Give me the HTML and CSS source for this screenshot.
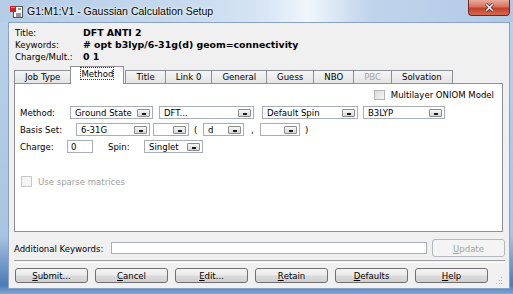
FILE: index.html
```html
<!DOCTYPE html>
<html>
<head>
    <title>Gaussian Calculation Setup</title>
    <link rel="stylesheet" href="styles.css">
</head>
<body>
<div class="frame">
    <div class="titlebar">
        <svg class="app-icon" width="13" height="13" viewBox="0 0 13 13">
            <rect x="3.5" y="1.5" width="9" height="11" fill="#fff" stroke="#555"/>
            <rect x="0" y="1" width="6" height="6" fill="#d42020"/>
            <rect x="1" y="2" width="4" height="1" fill="#ff8a8a"/>
            <path d="M6 9h5M6 11h5M8 4h3" stroke="#333" stroke-width="1"/>
        </svg>
        <span class="caption">G1:M1:V1 - Gaussian Calculation Setup</span>
        <div class="close">
            <svg width="11" height="9" viewBox="0 0 11 9">
                <path d="M2 1l7 7M9 1l-7 7" stroke="#5a1e14" stroke-width="3"/>
                <path d="M2 1l7 7M9 1l-7 7" stroke="#fff" stroke-width="1.6"/>
            </svg>
        </div>
    </div>

    <div class="client">
        <div class="summary">
            <div class="sum-row"><span class="sum-label">Title:</span><b>DFT ANTI 2</b></div>
            <div class="sum-row"><span class="sum-label">Keywords:</span><b># opt b3lyp/6-31g(d) geom=connectivity</b></div>
            <div class="sum-row"><span class="sum-label">Charge/Mult.:</span><b>0 1</b></div>
        </div>

        <div class="tabs">
            <span class="tab">Job Type</span>
            <span class="tab active"><span class="focus">Method</span></span>
            <span class="tab">Title</span>
            <span class="tab">Link 0</span>
            <span class="tab">General</span>
            <span class="tab">Guess</span>
            <span class="tab">NBO</span>
            <span class="tab disabled">PBC</span>
            <span class="tab">Solvation</span>
        </div>

        <div class="panel">
            <div class="oniom-row">
                <span class="check"></span>
                <span>Multilayer ONIOM Model</span>
            </div>

            <div class="field-row">
                <span class="lbl lbl-method">Method:</span>
                <span class="combo combo-state"><span class="val">Ground State</span><span class="drop"></span></span>
                <span class="combo combo-dft"><span class="val">DFT...</span><span class="drop"></span></span>
                <span class="combo combo-spin"><span class="val">Default Spin</span><span class="drop"></span></span>
                <span class="combo combo-func"><span class="val">B3LYP</span><span class="drop"></span></span>
            </div>

            <div class="field-row">
                <span class="lbl lbl-basis">Basis Set:</span>
                <span class="combo combo-basis"><span class="val">6-31G</span><span class="drop"></span></span>
                <span class="combo combo-small"><span class="val"></span><span class="drop"></span></span>
                <span class="paren">(</span>
                <span class="combo combo-pol"><span class="val">d</span><span class="drop"></span></span>
                <span class="paren">,</span>
                <span class="combo combo-pol2"><span class="val"></span><span class="drop"></span></span>
                <span class="paren">)</span>
            </div>

            <div class="field-row">
                <span class="lbl lbl-charge">Charge:</span>
                <span class="input input-charge">0</span>
                <span class="lbl lbl-spin">Spin:</span>
                <span class="combo combo-mult"><span class="val">Singlet</span><span class="drop"></span></span>
            </div>

            <div class="sparse-row">
                <span class="check"></span>
                <span>Use sparse matrices</span>
            </div>
        </div>

        <div class="addl-row">
            <span class="addl-label">Additional Keywords:</span>
            <span class="input input-addl"></span>
            <span class="btn btn-update"><u>U</u>pdate</span>
        </div>

        <div class="sep"></div>

        <div class="buttons">
            <span class="btn"><u>S</u>ubmit...</span>
            <span class="btn"><u>C</u>ancel</span>
            <span class="btn"><u>E</u>dit...</span>
            <span class="btn"><u>R</u>etain</span>
            <span class="btn"><u>D</u>efaults</span>
            <span class="btn"><u>H</u>elp</span>
            <svg class="grip" width="7" height="7" viewBox="0 0 7 7">
                <rect x="5" y="0" width="1" height="1" fill="#b8b8b8"/>
                <rect x="3" y="3" width="1" height="1" fill="#b8b8b8"/>
                <rect x="5" y="3" width="1" height="1" fill="#b8b8b8"/>
                <rect x="0" y="6" width="1" height="1" fill="#b8b8b8"/>
                <rect x="3" y="6" width="1" height="1" fill="#b8b8b8"/>
                <rect x="5" y="6" width="1" height="1" fill="#b8b8b8"/>
            </svg>
        </div>
    </div>
</div>
</body>
</html>
```

FILE: styles.css
```css
body {
    margin: 0;
    font-family: "DejaVu Sans Condensed", "DejaVu Sans", sans-serif;
    font-size: 9.5px;
    color: #000;
    background: #6f98c8;
}
.frame {
    width: 513px;
    height: 294px;
    overflow: hidden;
    background: linear-gradient(to bottom, #bcd2ea 0%, #a9c3e2 80%, #4c7bb7 97%, #7fa6d4 100%);
}
.titlebar {
    height: 22px;
    display: flex;
    align-items: center;
    padding-left: 10px;
    background: linear-gradient(to right, #b5cce6 0%, #c6d9ee 35%, #d8e6f5 52%, #f0f6fc 60%, #c0d4ec 72%, #b2c9e5 100%);
}
.app-icon {
    margin-right: 4px;
}
.caption {
    font-family: "Liberation Sans", Arial, sans-serif;
    font-size: 10.5px;
    color: #000;
    text-shadow: 0 0 4px #fff, 0 0 2px #fff;
}
.close {
    align-self: flex-start;
    margin-left: auto;
    margin-right: 3px;
    width: 42px;
    height: 16px;
    display: flex;
    align-items: center;
    justify-content: center;
    box-sizing: border-box;
    border: 1px solid #6b2a20;
    border-top: none;
    border-radius: 0 0 4px 4px;
    background: linear-gradient(to bottom, #e9a99c 0%, #d9735f 45%, #c2402a 55%, #d56a4f 100%);
}
.client {
    margin: 0 3px 0 8px;
    height: 267px;
    box-sizing: border-box;
    border: 1px solid #8aa3c2;
    background: #f0f0f0;
}
.summary {
    padding: 4px 0 0 6px;
}
.sum-row {
    display: flex;
    height: 12px;
    line-height: 12px;
}
.sum-label {
    width: 68px;
}
.sum-row b {
    font-family: "DejaVu Sans", sans-serif;
    font-size: 9.4px;
    font-weight: bold;
}
.tabs {
    display: flex;
    align-items: flex-end;
    height: 17px;
    margin: 3px 0 0 5px;
}
.tab {
    height: 13px;
    line-height: 12px;
    padding: 0 10px;
    box-sizing: border-box;
    border: 1px solid #8d9097;
    border-bottom: none;
    margin-right: -1px;
    background: linear-gradient(to bottom, #f5f5f5, #e4e4e4);
}
.tab.active {
    position: relative;
    z-index: 1;
    height: 18px;
    margin: 0 1px -1px 0;
    padding-top: 1px;
    background: #fff;
}
.tab.disabled {
    color: #a3a3a3;
}
.focus {
    outline: 1px dotted #333;
    outline-offset: 0;
}
.panel {
    height: 149px;
    margin: 0 6px 0 5px;
    box-sizing: border-box;
    border: 1px solid #8d9097;
    background: #fff;
    padding: 0 0 0 5px;
}
.oniom-row {
    display: flex;
    justify-content: flex-end;
    align-items: center;
    height: 11px;
    margin-top: 5px;
    padding-right: 8px;
}
.check {
    width: 11px;
    height: 10px;
    box-sizing: border-box;
    border: 1px solid #b4b4b4;
    background: linear-gradient(135deg, #dcdcdc, #f6f6f6);
    margin-right: 6px;
}
.field-row {
    display: flex;
    align-items: center;
    height: 13px;
    margin-top: 4px;
}
.oniom-row + .field-row {
    margin-top: 6px;
}
.lbl-method { width: 50px; }
.lbl-basis { width: 56px; }
.lbl-charge { width: 47px; }
.lbl-spin { width: 36px; margin-left: 15px; }
.combo {
    height: 13px;
    display: flex;
    align-items: center;
    box-sizing: border-box;
    border: 1px solid #a9aeb6;
    background: #fff;
    padding-left: 4px;
    margin-right: 6px;
}
.combo .val {
    flex: 1;
}
.drop {
    position: relative;
    width: 13px;
    height: 8px;
    box-sizing: border-box;
    border: 1px solid #8c8c8c;
    border-radius: 1px;
    background: linear-gradient(to bottom, #f8f8f8, #d6d6d6);
    margin-right: 2px;
}
.drop::after {
    content: "";
    position: absolute;
    left: 4px;
    bottom: 1px;
    width: 4px;
    height: 2px;
    background: #1a1a1a;
}
.combo-state { width: 83px; }
.combo-dft { width: 95px; margin-right: 8px; }
.combo-spin { width: 96px; margin-right: 5px; }
.combo-func { width: 82px; }
.combo-basis { width: 74px; margin-right: 3px; }
.combo-small { width: 36px; margin-right: 5px; }
.combo-pol { width: 41px; margin-right: 7px; }
.combo-pol2 { width: 40px; margin-right: 5px; }
.paren {
    width: 4px;
    margin-right: 5px;
}
.input {
    height: 13px;
    box-sizing: border-box;
    border: 1px solid #a9aeb6;
    background: #fff;
    padding-left: 3px;
    line-height: 11px;
}
.input-charge { width: 26px; }
.combo-mult { width: 59px; }
.sparse-row {
    display: flex;
    align-items: center;
    height: 11px;
    margin: 23px 0 0 1px;
    color: #a0a0a0;
}
.sparse-row .check {
    height: 11px;
    border-color: #c8c8c8;
    background: #f4f4f4;
}
.addl-row {
    display: flex;
    align-items: center;
    height: 18px;
    margin-top: 7px;
    padding-left: 5px;
}
.addl-label {
    width: 97px;
}
.input-addl {
    width: 316px;
    height: 12px;
    margin-right: 5px;
}
.btn {
    height: 15px;
    width: 73px;
    box-sizing: border-box;
    display: flex;
    align-items: center;
    justify-content: center;
    border: 1px solid #707070;
    border-radius: 3px;
    background: linear-gradient(to bottom, #f4f4f4 0%, #ebebeb 48%, #dcdcdc 52%, #cfcfcf 100%);
}
.btn-update {
    height: 18px;
    color: #a3a3a3;
    border-color: #b5b9bd;
    background: #f4f4f4;
}
.sep {
    height: 1px;
    margin: 3px 4px 0 5px;
    border-top: 1px solid #a0a0a0;
    border-bottom: 1px solid #fff;
}
.buttons {
    display: flex;
    gap: 7px;
    margin-top: 5px;
    padding: 0 6px;
    height: 16px;
}
.grip {
    margin-left: auto;
    align-self: flex-end;
}
```
